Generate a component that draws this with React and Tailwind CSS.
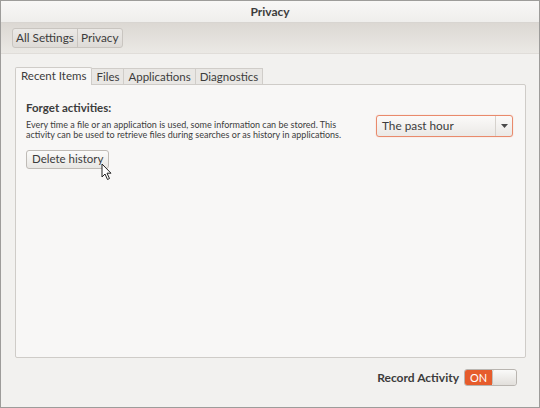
import React from "react";

const font = { fontFamily: 'Lato, "Open Sans", sans-serif' };

function Cursor() {
  return (
    <svg width="12" height="18" viewBox="0 0 12 18" className="absolute left-[100px] top-[162px]">
      <path d="M1 1 L1 14 L4 11 L6.5 16.5 L8.5 15.5 L6 10.2 L10 10.2 Z" fill="#fff" stroke="#222" strokeWidth="1" strokeLinejoin="round" />
    </svg>
  );
}

export default function App() {
  return (
    <div style={font} className="relative w-[540px] h-[408px] bg-[#f2f1ef] border border-[#9d9c9a] flex flex-col text-[#3c3c3c] overflow-hidden">
      {/* title bar */}
      <div className="h-[22px] flex items-center justify-center bg-gradient-to-b from-[#f8f7f6] to-[#efeeec] border-b border-[#d8d5d1]">
        <span className="text-[12px] font-bold text-[#3c3c3c] leading-none">Privacy</span>
      </div>
      {/* breadcrumb toolbar */}
      <div className="h-[31px] flex items-center pl-[11px] bg-gradient-to-b from-[#dcd8d3] to-[#ebe9e5] border-b border-[#e0ddd9]">
        <div className="flex h-[20px] rounded-[3px] border border-[#c9c5c0] bg-gradient-to-b from-[#ebe9e6] to-[#dedbd7] text-[11.8px] leading-none">
          <div className="flex items-center px-[3px] border-r border-[#c9c5c0]">All Settings</div>
          <div className="flex items-center px-[3px]">Privacy</div>
        </div>
      </div>
      {/* notebook */}
      <div className="flex-1 flex flex-col px-[14px] pt-[12px]">
        <div className="flex items-end h-[18px] text-[11.5px] leading-none">
          <div className="h-[18px] flex items-center px-[5px] border border-b-0 border-[#cfccc8] bg-[#f8f7f6] rounded-t-[2px] relative z-10 -mb-px pb-px">Recent Items</div>
          <div className="h-[16px] flex items-center px-[4px] border border-b-0 border-l-0 border-[#d0cdc9] bg-[#e9e7e4]">Files</div>
          <div className="h-[16px] flex items-center px-[4px] border border-b-0 border-l-0 border-[#d0cdc9] bg-[#e9e7e4]">Applications</div>
          <div className="h-[16px] flex items-center px-[4px] border border-b-0 border-l-0 border-[#d0cdc9] bg-[#e9e7e4]">Diagnostics</div>
        </div>
        <div className="h-[274px] w-[511px] border border-[#cfccc8] bg-[#f8f7f6] rounded-b-[2px] rounded-tr-[2px] pl-[10px] pt-[17px] flex justify-between">
          <div className="flex flex-col">
            <div className="text-[11.5px] font-bold leading-none">Forget activities:</div>
            <div className="mt-[6px] text-[9px] leading-[10.5px] whitespace-nowrap">
              Every time a file or an application is used, some information can be stored. This
              <br />
              activity can be used to retrieve files during searches or as history in applications.
            </div>
            <div className="mt-[9px] self-start h-[19px] px-[5px] flex items-center border border-[#bfbbb6] rounded-[3px] bg-gradient-to-b from-[#fbfbfa] to-[#e8e6e3] text-[11.5px] leading-none">
              Delete history
            </div>
          </div>
          <div className="mr-[12px] mt-[13px] w-[137px] h-[22px] flex border border-[#e98a6c] rounded-[3px] bg-gradient-to-b from-[#fbfaf9] to-[#ebe9e6] shadow-[0_0_1px_#f0a890]">
            <div className="flex-1 flex items-center pl-[5px] text-[11.8px] leading-none">The past hour</div>
            <div className="w-[17px] flex items-center justify-center border-l border-[#d6d2cd]">
              <svg width="7" height="4" viewBox="0 0 7 4"><path d="M0 0 H7 L3.5 4 Z" fill="#4a4a4a" /></svg>
            </div>
          </div>
        </div>
        {/* footer */}
        <div className="flex justify-end items-center mt-[11px] mr-[8px]">
          <span className="text-[12px] font-bold leading-none mr-[5px]">Record Activity</span>
          <div className="w-[53px] h-[17px] flex rounded-[3px] border border-[#b9b5b0] overflow-hidden">
            <div className="w-[27px] bg-[#e65c2c] flex items-center justify-center text-[11px] text-white leading-none">ON</div>
            <div className="flex-1 bg-gradient-to-b from-[#fafaf9] to-[#e2dfdb] rounded-[2px] border-l border-[#c2beb9]" />
          </div>
        </div>
      </div>
      <Cursor />
    </div>
  );
}
